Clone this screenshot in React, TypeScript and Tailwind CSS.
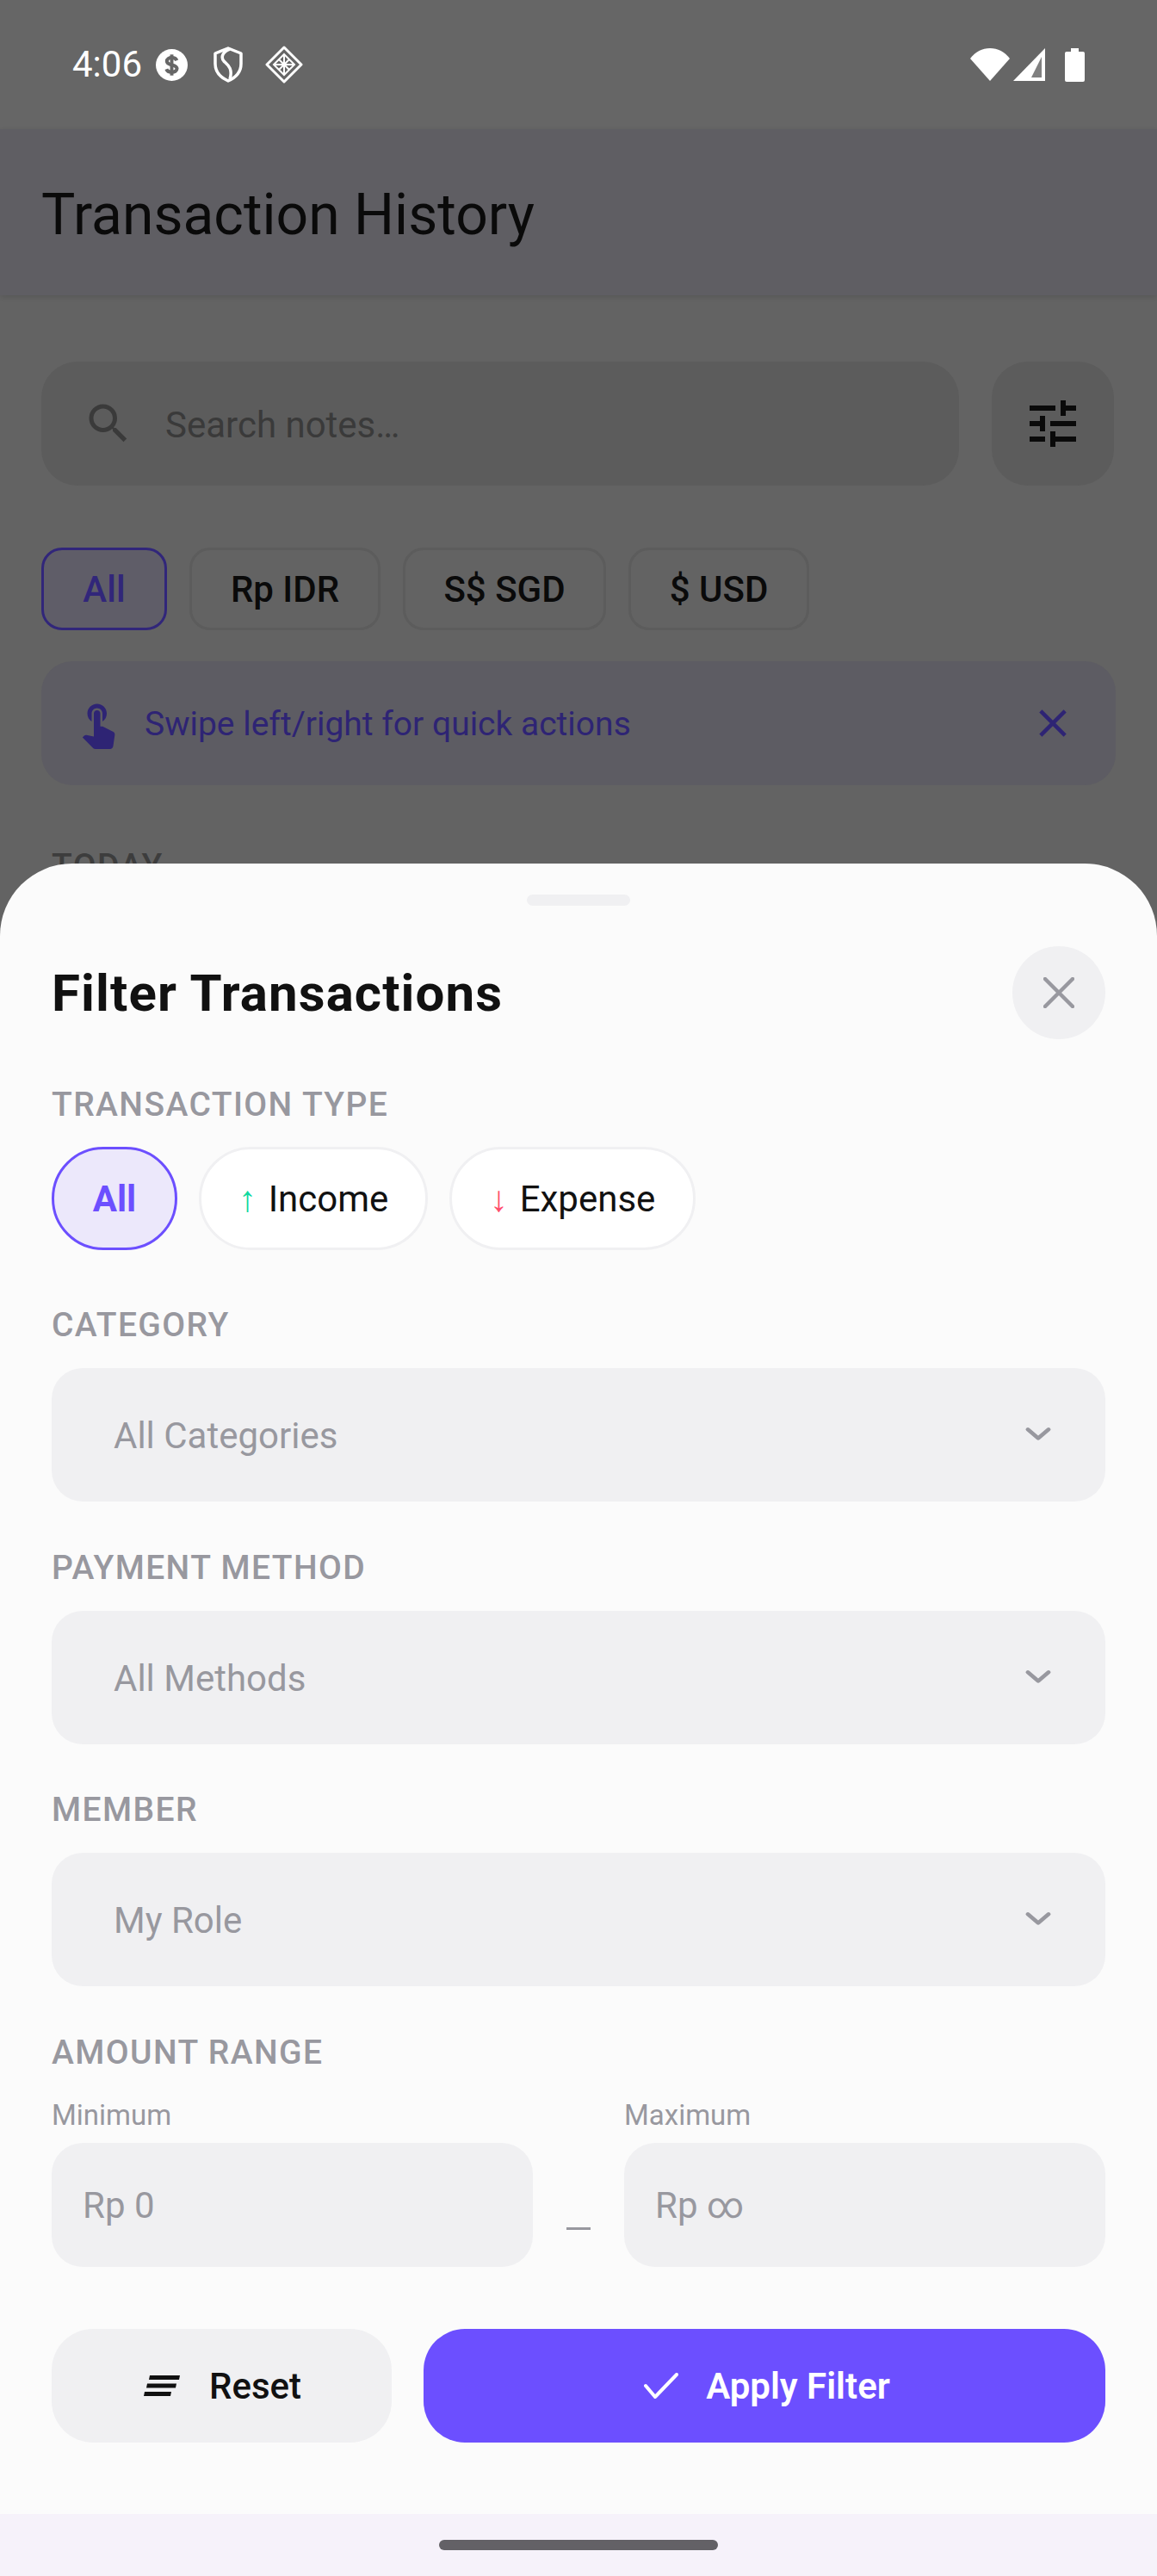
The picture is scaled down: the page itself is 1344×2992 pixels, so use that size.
import React from "react";

const Chip = ({ label, active, w }: { label: string; active?: boolean; w: string }) => (
  <div className={`h-[96px] ${w} flex items-center justify-center rounded-[24px] border-[3px] text-[42px] font-medium ${active ? "border-[#31267a] bg-[#5f5d68] text-[#31267a]" : "border-[#5c5c5c] text-[#0a0a0a]"}`}>
    {label}
  </div>
);

const Label = ({ children, cls }: { children: React.ReactNode; cls: string }) => (
  <div className={`h-[44px] flex items-center text-[39px] leading-none font-medium tracking-[1.4px] text-[#98989f] ${cls}`}>{children}</div>
);

const Select = ({ label, cls }: { label: string; cls: string }) => (
  <div className={`h-[155px] rounded-[36px] bg-[#f0f0f2] flex items-center justify-between pl-[72px] pr-[60px] text-[42px] text-[#98989f] ${cls}`}>
    <span className="pt-[2px]">{label}</span>
    <svg width="36" height="24" viewBox="0 0 36 24" fill="none" stroke="#98989f" strokeWidth="5" strokeLinecap="round" strokeLinejoin="round">
      <path d="M6 5l12 12L30 5" transform="translate(0 1) scale(1 0.85)" />
    </svg>
  </div>
);

const RangeField = ({ label, value }: { label: string; value: string }) => (
  <div className="w-[559px]">
    <div className="h-[40px] flex items-center text-[33px] text-[#98989f]">{label}</div>
    <div className="mt-[12px] h-[144px] rounded-[36px] bg-[#f0f0f2] flex items-center pl-[36px] text-[42px] text-[#98989f]">{value}</div>
  </div>
);

export default function App() {
  return (
    <div className="relative w-[1344px] h-[2992px] overflow-hidden flex flex-col bg-[#636363] font-['Roboto',sans-serif]">
      {/* status bar */}
      <div className="h-[150px] shrink-0 flex items-start justify-between pt-[54px] pl-[84px] pr-[84px] bg-[#666666]">
        <div className="flex items-center h-[42px] text-white">
          <span className="text-[42px] leading-none">4:06</span>
          <svg className="ml-[16px]" width="37" height="37" viewBox="0 0 38 38">
            <circle cx="19" cy="19" r="19" fill="#fff" />
            <path d="M25 13.500c-.8-2-3-3.200-6-3.200-3.300 0-5.800 1.600-5.800 4.300 0 5.600 12 3 12 8.600 0 2.800-2.700 4.300-6.200 4.300-3.200 0-5.500-1.300-6.300-3.600" fill="none" stroke="#666" strokeWidth="4.200" />
            <path d="M19 6.500v25" stroke="#666" strokeWidth="4" />
          </svg>
          <svg className="ml-[29px]" width="36" height="42" viewBox="0 0 36 42" fill="none" stroke="#fff" strokeWidth="3.500">
            <path d="M18 2l15 6v12c0 10-6 16-15 20C9 36 3 30 3 20V8z" strokeLinejoin="round" />
            <path d="M20 3c-8 3-11 9-7 14 4 4 11 8 7 21" />
          </svg>
          <svg className="ml-[25px]" width="44" height="44" viewBox="0 0 44 44" fill="none" stroke="#fff">
            <path d="M22 2l20 20-20 20L2 22z" strokeWidth="3" strokeLinejoin="round" />
            <path d="M22 10l12 12-12 12-12-12zM10 22h24M22 10v24M16 16l12 12M28 16L16 28" strokeWidth="2" />
          </svg>
        </div>
        <div className="flex items-center h-[42px]">
          <svg width="46" height="38" viewBox="0 0 46 38"><path d="M0 12C6 4 14 0 23 0s17 4 23 12L23 38z" fill="#fff" /></svg>
          <svg className="ml-[4px]" width="37" height="38" viewBox="0 0 37 38">
            <path d="M37 0v38H0z" fill="#fff" />
            <path d="M33 10v24H21z" fill="#808080" />
          </svg>
          <svg className="ml-[23px]" width="23" height="39" viewBox="0 0 23 39">
            <path d="M7 0h9v4h5a2 2 0 012 2v31a2 2 0 01-2 2H2a2 2 0 01-2-2V6a2 2 0 012-2h5z" fill="#fff" />
          </svg>
        </div>
      </div>

      {/* app header */}
      <div className="h-[193px] shrink-0 flex items-center pl-[48px] pt-[5px] bg-[#5f5e63] shadow-[0_2px_6px_rgba(0,0,0,0.12)]">
        <span className="text-[66px] text-[#0a0a0a]">Transaction History</span>
      </div>

      {/* dimmed content */}
      <div className="px-[48px] pt-[77px] flex flex-col">
        <div className="flex gap-[38px]">
          <div className="w-[1066px] h-[144px] rounded-[42px] bg-[#5c5c5c] flex items-center pl-[48px] text-[#3a3a3a]">
            <svg width="60" height="60" viewBox="0 0 24 24" fill="#3a3a3a">
              <path d="M15.500 14h-.79l-.28-.27A6.471 6.471 0 0016 9.500 6.500 6.500 0 109.500 16c1.610 0 3.090-.59 4.230-1.570l.27.28v.79l5 4.990L20.490 19l-4.990-5zm-6 0C7.010 14 5 11.990 5 9.500S7.010 5 9.500 5 14 7.010 14 9.500 11.990 14 9.500 14z" />
            </svg>
            <span className="ml-[36px] pt-[2px] text-[42px]">Search notes…</span>
          </div>
          <div className="w-[142px] h-[144px] rounded-[42px] bg-[#5c5c5c] flex items-center justify-center">
            <svg width="72" height="72" viewBox="0 0 24 24" fill="#0a0a0a">
              <path d="M3 17v2h6v-2H3zM3 5v2h10V5H3zm10 16v-2h8v-2h-8v-2h-2v6h2zM7 9v2H3v2h4v2h2V9H7zm14 4v-2H11v2h10zm-6-4h2V7h4V5h-4V3h-2v6z" />
            </svg>
          </div>
        </div>

        <div className="mt-[72px] flex gap-[26px]">
          <Chip label="All" active w="w-[146px]" />
          <Chip label="Rp IDR" w="w-[222px]" />
          <Chip label="S$ SGD" w="w-[236px]" />
          <Chip label="$ USD" w="w-[210px]" />
        </div>

        <div className="mt-[36px] h-[144px] rounded-[36px] bg-[#5d5c63] flex items-center pl-[36px] pr-[46px]">
          <svg width="60" height="60" viewBox="0 0 24 24" fill="#2e2474">
            <path d="M9 11.240V7.500C9 6.120 10.120 5 11.500 5S14 6.120 14 7.500v3.740c1.210-.81 2-2.180 2-3.740C16 5.010 13.990 3 11.500 3S7 5.010 7 7.500c0 1.560.79 2.930 2 3.740zm9.840 4.630l-4.540-2.260c-.17-.07-.35-.11-.54-.11H13v-6c0-.83-.67-1.500-1.500-1.500S10 6.670 10 7.500v10.740l-3.430-.72c-.08-.01-.15-.03-.24-.03-.31 0-.59.13-.79.33l-.79.8 4.940 4.940c.27.27.65.44 1.060.44h6.790c.75 0 1.330-.55 1.440-1.280l.75-5.270c.01-.07.02-.14.02-.2 0-.62-.38-1.160-.91-1.380z" />
          </svg>
          <span className="ml-[24px] pt-[2px] text-[39px] text-[#2e2474]">Swipe left/right for quick actions</span>
          <svg className="ml-auto" width="54" height="54" viewBox="0 0 24 24" fill="#2e2474">
            <path d="M19 6.410L17.590 5 12 10.590 6.410 5 5 6.410 10.590 12 5 17.590 6.410 19 12 13.410 17.590 19 19 17.590 13.410 12z" />
          </svg>
        </div>

        <div className="mt-[72px] pl-[12px] text-[39px] leading-[44px] font-medium tracking-[1.4px] text-[#3d3d3d]">TODAY</div>
      </div>

      {/* nav bar */}
      <div className="mt-auto h-[72px] shrink-0 bg-[#f6f2fa] flex items-start justify-center pt-[30px]">
        <div className="w-[324px] h-[12px] rounded-full bg-[#636166]" />
      </div>

      {/* bottom sheet */}
      <div className="absolute left-0 right-0 top-[1003px] bottom-[72px] rounded-t-[84px] bg-[#fbfbfb] px-[60px] flex flex-col">
        <div className="mt-[36px] mx-auto w-[120px] h-[13px] rounded-full bg-[#f0f0f2]" />
        <div className="mt-[47px] flex items-center justify-between">
          <span className="pt-[2px] text-[60px] font-bold tracking-[1.1px] text-[#111111]">Filter Transactions</span>
          <div className="w-[108px] h-[108px] rounded-full bg-[#f0f0f2] flex items-center justify-center">
            <svg width="36" height="36" viewBox="0 0 36 36" stroke="#98989f" strokeWidth="4.500" strokeLinecap="round">
              <path d="M2 2l32 32M34 2L2 34" />
            </svg>
          </div>
        </div>

        <Label cls="mt-[54px]">TRANSACTION TYPE</Label>
        <div className="mt-[27px] flex gap-[25px] text-[42px]">
          <div className="w-[146px] h-[120px] rounded-full border-[3px] border-[#6c4fff] bg-[#ece8fb] flex items-center justify-center font-bold text-[#6c4fff]">All</div>
          <div className="w-[266px] h-[120px] rounded-full border-[3px] border-[#f0f0f2] bg-white flex items-center justify-center gap-[14px] text-[#111111]">
            <span className="font-['Liberation_Sans',sans-serif] text-[#10d9a0]">↑</span>Income
          </div>
          <div className="w-[286px] h-[120px] rounded-full border-[3px] border-[#f0f0f2] bg-white flex items-center justify-center gap-[14px] text-[#111111]">
            <span className="font-['Liberation_Sans',sans-serif] text-[#ff4d6d]">↓</span>Expense
          </div>
        </div>

        <Label cls="mt-[65px]">CATEGORY</Label>
        <Select label="All Categories" cls="mt-[28px]" />
        <Label cls="mt-[55px]">PAYMENT METHOD</Label>
        <Select label="All Methods" cls="mt-[28px]" />
        <Label cls="mt-[54px]">MEMBER</Label>
        <Select label="My Role" cls="mt-[28px]" />
        <Label cls="mt-[55px]">AMOUNT RANGE</Label>

        <div className="mt-[31px] flex justify-between">
          <RangeField label="Minimum" value="Rp 0" />
          <div className="w-[28px] h-[3px] mt-[150px] bg-[#98989f]" />
          <RangeField label="Maximum" value="Rp ∞" />
        </div>

        <div className="mt-[72px] flex gap-[37px]">
          <div className="w-[395px] h-[132px] rounded-[48px] bg-[#f0f0f2] flex items-center justify-center gap-[34px] pl-[2px] text-[42px] font-medium text-[#111111]">
            <svg width="42" height="24" viewBox="0 0 42 24" fill="#111111">
              <path d="M7 0h35l-1 5H6zM4 9.500h34l-1 5H3zM1 19h31l-1 5H0z" />
            </svg>
            Reset
          </div>
          <div className="flex-1 h-[132px] rounded-[48px] bg-[#6c4fff] flex items-center justify-center gap-[32px] pl-[6px] text-[42px] font-semibold text-white">
            <svg width="40" height="30" viewBox="0 0 40 30" fill="none" stroke="#fff" strokeWidth="4" strokeLinecap="round" strokeLinejoin="round">
              <path d="M2 15l11 13L38 2" />
            </svg>
            Apply Filter
          </div>
        </div>
      </div>
    </div>
  );
}
